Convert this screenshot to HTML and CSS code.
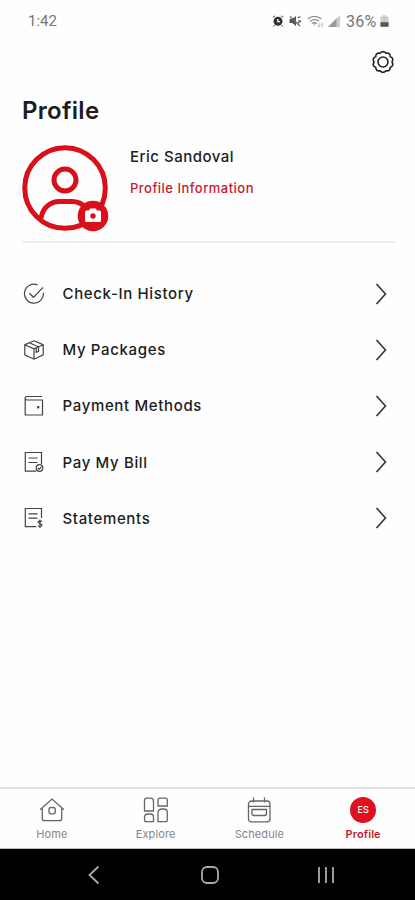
FILE: index.html
```html
<!DOCTYPE html>
<html lang="en">
<head>
<meta charset="utf-8">
<title>Profile</title>
<link rel="stylesheet" href="styles.css">
</head>
<body>
<div class="phone">
  <header class="status">
    <span class="clock">1:42</span>
    <div class="indicators">
      <svg width="12" height="12" viewBox="0 0 12 12"><circle cx="6" cy="6.3" r="4.5" fill="#333"/><path d="M.8 2.5 3 .8M11.2 2.5 9 .8M2.5 10 1.3 11.5M9.5 10l1.2 1.5" stroke="#444"/><path d="M5.8 4v2.7H8" fill="none" stroke="#fff" stroke-width="1.3"/></svg>
      <svg width="13" height="12" viewBox="0 0 13 12"><path d="M.5 4h2.8L7 1v10L3.3 8H.5z" fill="#555"/><path d="M1 1.5 11 11M8.500 3l3-1.500M9 5.800h3M9 8l3-2" stroke="#666" stroke-width="1.300" fill="none"/></svg>
      <svg width="17" height="13" viewBox="0 0 17 13"><path d="M.8 3.800Q7.500-1.200 14.200 3.800M3 6.200q4.500-3.200 9 0M5.200 8.500q2.300-1.500 4.600 0" fill="none" stroke="#888" stroke-width="1.300"/><path d="m6.500 9.500 1 1.200 1-1.200z" fill="#888"/><path d="M12 8v4m-1-1.200 1 1.200 1-1.200M15 12V8.500m-1 1 1-1 1 1" fill="none" stroke="#aaa" stroke-width=".8"/></svg>
      <svg class="signal" width="13" height="12" viewBox="0 0 13 12"><path d="M0 12 12 0v12z" fill="#ccc"/><path d="M0 12 8.500 3.500V12z" fill="#999"/></svg>
      <span class="percent">36%</span>
      <svg width="9" height="12" viewBox="0 0 10 13"><path d="M3 0h4v1.500h1.500q1 0 1 1V12q0 1-1 1h-7q-1 0-1-1V2.500q0-1 1-1H3z" fill="#ccc"/><path d="M.5 8h9v4q0 1-1 1h-7q-1 0-1-1z" fill="#555"/></svg>
    </div>
  </header>

  <div class="toolbar">
    <svg width="24" height="24" viewBox="-12 -12 24 24" fill="none" stroke="#222" stroke-width="1.600" stroke-linejoin="round"><path d="M-3-8.800Q0-12 3-8.800Q7.200-9.400 7.200-5.600Q11.200-3.800 9 0Q11.200 3.800 7.200 5.600Q7.200 9.400 3 8.800Q0 12-3 8.800Q-7.200 9.400-7.200 5.600Q-11.200 3.800-9 0Q-11.200-3.800-7.200-5.600Q-7.200-9.400-3-8.800Z"/><circle r="5"/></svg>
  </div>

  <main class="content">
    <h1 class="title">Profile</h1>
    <section class="person">
      <svg class="avatar" width="88" height="88" viewBox="0 0 88 88">
        <g fill="none" stroke="#d9101a" stroke-width="5"><circle cx="43" cy="43" r="40.300"/><circle cx="43" cy="35" r="11"/><path d="M19 73C21 62 29 56.500 37 56.500H50Q58 56.500 63 62"/></g>
        <circle cx="71" cy="71" r="15.300" fill="#d9101a"/>
        <path d="M64.500 65.500H67l1.200-2h5.600l1.200 2h2.500q1.500 0 1.500 1.500v8.500q0 1.500-1.500 1.500h-13q-1.500 0-1.500-1.500V67q0-1.500 1.500-1.500z" fill="#fff"/><circle cx="71" cy="71" r="2.700" fill="#d9101a"/>
      </svg>
      <div class="details">
        <span class="name">Eric Sandoval</span>
        <a class="info">Profile Information</a>
      </div>
    </section>

    <nav class="menu">
      <a class="row">
        <svg class="icon" viewBox="0 0 22 22"><path d="M14.500 1.900A9.500 9.500 0 1 0 20.400 9.800M6.300 10.300l4.200 4L20 4.300"/></svg>
        <span class="label">Check-In History</span>
        <svg class="chevron" viewBox="0 0 12 22"><path d="m1.500 1 9 10-9 10"/></svg>
      </a>
      <a class="row">
        <svg class="icon" viewBox="0 0 22 22"><path d="m11 1.800 9.200 3.900v10.200L11 20.200l-9.200-4.300V5.700zM1.800 5.700 11 9.800l9.200-4.100M11 9.800v10.400M6.200 3.800l9.300 4v4.500l-2.300 1V8.800"/></svg>
        <span class="label">My Packages</span>
        <svg class="chevron" viewBox="0 0 12 22"><path d="m1.500 1 9 10-9 10"/></svg>
      </a>
      <a class="row">
        <svg class="icon" viewBox="0 0 22 22"><path d="M19 1.500H4q-1.800 0-1.800 1.800 0 1.700 1.800 1.700h15.500v15H2.200V3.300"/><circle cx="15.200" cy="12.300" r=".7" fill="#444"/></svg>
        <span class="label">Payment Methods</span>
        <svg class="chevron" viewBox="0 0 12 22"><path d="m1.500 1 9 10-9 10"/></svg>
      </a>
      <a class="row">
        <svg class="icon" viewBox="0 0 22 22"><path d="M18.500 13V1.500H2.300v18.700h11M5.500 7h9M5.500 11.500h9"/><circle cx="16.500" cy="17" r="3.300"/><path d="m14.800 17 1.300 1.300 2.500-2.600"/></svg>
        <span class="label">Pay My Bill</span>
        <svg class="chevron" viewBox="0 0 12 22"><path d="m1.500 1 9 10-9 10"/></svg>
      </a>
      <a class="row">
        <svg class="icon" viewBox="0 0 22 22"><path d="M18.500 11V1.500H2.300v18.200h11M5.500 6.800h9M5.500 11.200h9M19 14.500q-2-1.200-3.600 0-.9 1.500 1.300 2 2.700.6 1.900 2.300-1.600 1.300-3.700 0M17 12.500v8.500"/></svg>
        <span class="label">Statements</span>
        <svg class="chevron" viewBox="0 0 12 22"><path d="m1.500 1 9 10-9 10"/></svg>
      </a>
    </nav>
  </main>

  <nav class="tabs">
    <a class="tab">
      <svg viewBox="0 0 26 26"><path d="M1 12.800 13 2l12 10.800M3.300 11v10.500q0 2.200 2.200 2.200h15q2.200 0 2.200-2.200V11"/><rect x="10" y="10.500" width="6.300" height="6.300" rx="2"/></svg>
      <span>Home</span>
    </a>
    <a class="tab">
      <svg viewBox="0 0 26 26"><path d="M3.500 1.200h4q3 0 3 3V14h-9V3.200q0-2 2-2zM17 1.200h5.300q2 0 2 2V9h-9.300V3.200q0-2 2-2zM5 17h2.500q3 0 3 3v4.700h-7q-2 0-2-2V20.500Q1.500 17 5 17zM19 12h1.800q3.500 0 3.500 3.500v7.200q0 2-2 2H15V16q0-4 4-4z"/></svg>
      <span>Explore</span>
    </a>
    <a class="tab">
      <svg viewBox="0 0 26 26"><rect x="2.500" y="4" width="21.500" height="20.800" rx="3"/><path d="M7.500.5v5M18.500.5v5M2.500 9.300h21.500M6 12.500v4q0 2 2 2h10.500q2 0 2-2v-4z"/></svg>
      <span>Schedule</span>
    </a>
    <a class="tab active">
      <b class="initials">ES</b>
      <span>Profile</span>
    </a>
  </nav>

  <footer class="system">
    <svg viewBox="0 0 24 24"><path d="M16.500 3.500 7.500 12l9 8.500"/></svg>
    <svg viewBox="0 0 24 24"><rect x="4" y="4" width="16" height="16" rx="5"/></svg>
    <svg viewBox="0 0 24 24"><path d="M5 4v16M12 4v16M19 4v16"/></svg>
  </footer>
</div>
</body>
</html>
```

FILE: styles.css
```css
* { box-sizing: border-box; }
body { margin: 0; background: #fefefe; font-family: Inter, "Liberation Sans", sans-serif; color: #1c1d20; }
svg { display: block; flex: none; }
.phone { width: 415px; height: 900px; display: flex; flex-direction: column; overflow: hidden; }

.status { height: 42px; padding: 0 26px 0 28px; display: flex; justify-content: space-between; align-items: center; font-family: Roboto, sans-serif; font-size: 15px; color: #777; }
.indicators { display: flex; align-items: center; gap: 5px; }
.signal { margin-left: -1px; }
.percent { width: 32px; font-size: 16px; letter-spacing: .3px; white-space: nowrap; margin-right: -3px; }

.toolbar { height: 40px; padding: 0 20px; display: flex; justify-content: flex-end; align-items: center; }

.content { flex: 1; padding: 12px 20px 0 22px; }
.title { margin: 0; height: 32px; line-height: 33px; font-size: 24px; font-weight: 600; letter-spacing: .3px; }
.person { margin-top: 19px; height: 98px; display: flex; gap: 20px; border-bottom: 2px solid #eeeeef; }
.details { display: flex; flex-direction: column; padding-top: 2px; }
.name { height: 20px; line-height: 20px; font-size: 15px; font-weight: 500; letter-spacing: .5px; }
.info { margin-top: 12px; height: 18px; line-height: 18px; font-size: 13px; font-weight: 500; letter-spacing: .48px; color: #c51a32; }

.menu { margin-top: 22.500px; }
.row { height: 56.200px; display: flex; align-items: center; }
.icon { width: 22px; height: 22px; margin-left: 1px; fill: none; stroke: #444; stroke-width: 1.200; }
.label { flex: 1; margin-left: 17.500px; font-size: 15px; font-weight: 500; letter-spacing: .65px; }
.chevron { width: 12px; height: 22px; margin-right: 8px; fill: none; stroke: #333; stroke-width: 1.600; }

.tabs { height: 62px; display: grid; grid-template-columns: repeat(4, 1fr); border-top: 2px solid #e2e2e3; border-bottom: 1px solid #bbb; }
.tab { display: flex; flex-direction: column; align-items: center; padding-top: 7.500px; font-size: 11px; color: #858585; letter-spacing: .1px; }
.tab svg { width: 26px; height: 26px; fill: none; stroke: #666; stroke-width: 1.300; }
.tab span { margin-top: 4px; line-height: 14px; }
.active { color: #c51a2a; font-weight: 600; }
.initials { width: 26px; height: 26px; border-radius: 50%; background: #e01020; color: #fff; font-size: 9px; line-height: 26px; text-align: center; font-weight: 500; }

.system { height: 51px; padding: 0 77px 0 82px; display: flex; justify-content: space-between; align-items: center; background: #000; }
.system svg { width: 24px; height: 24px; fill: none; stroke: #aaa; stroke-width: 1.800; }
```
